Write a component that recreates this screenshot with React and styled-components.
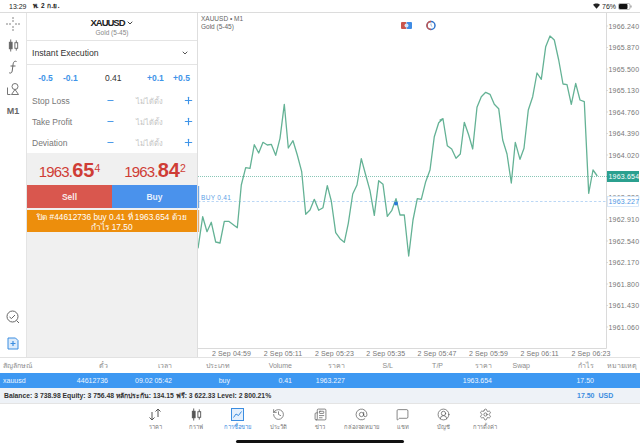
import React from "react";
import styled, { createGlobalStyle } from "styled-components";
import { ChevronDown, ArrowDown, ArrowUp, History, Newspaper, AtSign, MessageSquare, CircleUserRound, Settings, Plus, Minus } from "lucide-react";

const Global = createGlobalStyle`
  *, *::before, *::after { box-sizing: border-box; }
  html, body { margin: 0; padding: 0; background: #fff; }
  body { font-family: "Liberation Sans", "Noto Sans", "DejaVu Sans", sans-serif; color: #333; overflow: hidden; }
`;

const Page = styled.div`
  position: relative;
  width: 640px;
  height: 447px;
  overflow: hidden;
  display: flex;
  flex-direction: column;
  background: #fff;
`;

const StatusBar = styled.div`
  height: 13px;
  flex: none;
  display: flex;
  align-items: center;
  padding: 0 8px 0 9px;
  font-size: 7px;
  color: #222;
  gap: 6px;
  border-bottom: 1px solid #dcdcdc;
`;
const StatusDate = styled.span`
  letter-spacing: 0.3px;
  font-weight: 700;
  font-size: 6.5px;
`;
const StatusRight = styled.div`
  margin-left: auto;
  display: flex;
  align-items: center;
  gap: 2px;
`;
const Main = styled.div`
  height: 345px;
  flex: none;
  display: flex;
  border-bottom: 1px solid #e2e2e2;
`;
const ToolRail = styled.div`
  width: 27px;
  flex: none;
  display: flex;
  flex-direction: column;
  align-items: center;
  color: #666;
  border-right: 1px solid #e4e4e4;
`;
const ToolSlot = styled.div`
  height: 21.7px;
  display: flex;
  align-items: center;
  justify-content: center;
  font-size: 9px;
  font-weight: 700;
  color: ${(p) => p.$color || "#666"};
`;
const RailBottom = styled.div`
  margin-top: auto;
  display: flex;
  flex-direction: column;
  gap: 4.5px;
  padding-bottom: 3px;
`;
const OrderPanel = styled.div`
  width: 171px;
  flex: none;
  display: flex;
  flex-direction: column;
  background: #f0f0f0;
  border-right: 1px solid #dedede;
`;
const SymbolHead = styled.div`
  height: 28px;
  flex: none;
  background: #fff;
  border-bottom: 1px solid #e4e4e4;
  display: flex;
  flex-direction: column;
  align-items: center;
  justify-content: center;
`;
const SymbolName = styled.div`
  display: flex;
  align-items: center;
  gap: 1px;
  font-weight: 700;
  font-size: 9.5px;
  letter-spacing: -1px;
  line-height: 12px;
  color: #222;
`;
const SymbolSub = styled.div`
  font-size: 6.5px;
  line-height: 8px;
  color: #888;
`;
const ExecRow = styled.div`
  height: 24px;
  flex: none;
  background: #fff;
  border-bottom: 1px solid #e4e4e4;
  display: flex;
  align-items: center;
  justify-content: space-between;
  padding: 0 8px 0 5px;
  font-size: 8.7px;
  color: #333;
`;
const FormBlock = styled.div`
  height: 88px;
  flex: none;
  background: #fff;
  display: flex;
  flex-direction: column;
`;
const StepRow = styled.div`
  height: 25px;
  display: grid;
  grid-template-columns: 11px 15px 10px 14px 28px 16px 26px 16px 10px 17px;
  align-items: center;
  font-size: 8.5px;
`;
const Step = styled.span`
  color: ${(p) => (p.$plain ? "#333" : "#3f94e8")};
  font-weight: ${(p) => (p.$plain ? 400 : 700)};
  grid-column: ${(p) => p.$col};
  text-align: center;
  white-space: nowrap;
`;
const FieldRow = styled.div`
  height: 21px;
  display: grid;
  grid-template-columns: 72px 12px 66px 12px;
  align-items: center;
  padding-left: 5px;
  font-size: 8.5px;
  color: #777;
`;
const FieldSign = styled.span`
  color: #3f94e8;
  display: flex;
  justify-content: center;
`;
const FieldHint = styled.span`
  font-size: 7.5px;
  color: #c4c4c4;
  text-align: center;
`;
const Quotes = styled.div`
  height: 32px;
  flex: none;
  display: grid;
  grid-template-columns: 85px 86px;
  align-items: center;
  color: #cf3d36;
  padding-top: 3px;
`;
const Quote = styled.div`
  display: flex;
  justify-content: center;
  align-items: baseline;
  font-size: 15px;
  letter-spacing: -0.8px;
  line-height: 20px;
`;
const QuoteBig = styled.span`
  font-size: 20px;
  font-weight: 700;
  letter-spacing: 0;
  line-height: 20px;
`;
const QuoteSup = styled.span`
  align-self: flex-start;
  font-size: 10.5px;
  letter-spacing: 0;
  line-height: 16px;
`;
const TradeRow = styled.div`
  height: 23px;
  flex: none;
  display: flex;
`;
const TradeButton = styled.div`
  flex: 1;
  display: flex;
  align-items: center;
  justify-content: center;
  font-size: 8.5px;
  font-weight: 700;
  color: rgba(255, 255, 255, 0.88);
  background: ${(p) => p.$bg};
`;
const Notice = styled.div`
  margin-top: 2px;
  height: 22px;
  flex: none;
  padding-top: 2px;
  background: #ed8e0c;
  color: #fff;
  font-size: 8.3px;
  line-height: 10px;
  text-align: center;
  white-space: nowrap;
`;
const ChartArea = styled.div`
  position: relative;
  flex: 1;
  min-width: 0;
`;
const ChartSvg = styled.svg`
  display: block;
  width: 442px;
  height: 344px;
`;
const ChartTitle = styled.div`
  position: absolute;
  left: 3px;
  top: 2px;
  font-size: 6.5px;
  line-height: 8px;
  color: #666;
`;
const TableHead = styled.div`
  height: 15px;
  flex: none;
  display: grid;
  grid-template-columns: 40px 65px 64px 58px 62px 53px 48px 50px 49px 38px 64px 43px;
  padding-left: 3px;
  align-items: center;
  font-size: 7px;
  color: #8c8c8c;
`;
const HeadCell = styled.span`
  text-align: ${(p) => (p.$left ? "left" : "right")};
  white-space: nowrap;
`;
const TableRow = styled(TableHead)`
  background: #3d98f2;
  color: #eef6ff;
`;
const BalanceBar = styled.div`
  height: 16px;
  flex: none;
  display: flex;
  align-items: center;
  background: #eef2f7;
  padding-left: 4px;
  font-size: 6.8px;
  font-weight: 700;
  color: #333;
  border-bottom: 1px solid #e4e4e4;
`;
const BalanceTotal = styled.span`
  margin-left: auto;
  width: 63px;
  font-size: 7px;
  color: #3b8de0;
  white-space: pre;
`;
const TabBar = styled.div`
  flex: 1;
  display: flex;
  justify-content: center;
`;
const Tab = styled.div`
  width: 41.25px;
  display: flex;
  flex-direction: column;
  align-items: center;
  padding-top: 4px;
  color: ${(p) => (p.$active ? "#3b8de0" : "#555")};
`;
const TabIcon = styled.div`
  height: 13px;
  display: flex;
  align-items: center;
  justify-content: center;
`;
const TabLabel = styled.div`
  margin-top: 2px;
  font-size: 5.8px;
  line-height: 9px;
  white-space: nowrap;
  color: ${(p) => (p.$active ? "#3b8de0" : "#777")};
`;
const HomeIndicator = styled.div`
  position: absolute;
  left: 236px;
  top: 440px;
  width: 168px;
  height: 3px;
  border-radius: 2px;
  background: #111;
`;

const z8 = [[0,385],[14,290],[27,335],[40,307],[53,366],[66,369],[79,304],[92,304],[118,323],[130,195],[143,143],[156,145],[169,74],[182,99],[195,67],[208,75],[220,73],[233,106],[246,55],[259,-47],[271,84],[285,62],[298,105],[311,155],[323,283],[336,270],[349,238],[362,271],[375,263],[388,197],[400,243],[413,338],[426,356],[439,367],[451,310],[464,222],[477,195],[490,116],[503,165],[516,212],[529,286],[542,182],[555,193],[568,289],[581,272],[594,236],[606,285],[619,285],[632,408],[645,300],[658,236],[670,238],[683,185],[696,150],[709,50],[722,8]];
const z6 = [[0,360],[9,357],[22,437],[35,447],[48,475],[61,462],[73,367],[86,405],[98,447],[111,322],[124,290],[137,277],[150,283],[163,313],[176,326],[188,420],[201,462],[214,549],[226,427],[240,478],[252,445],[265,330],[278,290],[291,219],[304,238],[317,140],[330,108],[343,120],[356,180],[369,252],[381,254],[394,313],[407,250],[420,300],[433,305],[446,580],[459,510],[472,528]];
const line = [
  ...z8.map(([x, y]) => [198 + x / 3, 120 + y / 3]),
  [198 + 735 / 3, 120 - 4 / 3],
  ...z6.map(([x, y]) => [440 + x / 3, y / 3]),
].map((p) => p.map((v) => v.toFixed(1)).join(",")).join(" ");

const priceTicks = [[26,"1966.240"],[47.5,"1965.870"],[69,"1965.500"],[90.5,"1965.130"],[112,"1964.760"],[133.5,"1964.390"],[155,"1964.020"],[219.5,"1962.910"],[241,"1962.540"],[262.5,"1962.170"],[284,"1961.800"],[305.5,"1961.430"],[327,"1961.060"]];
const timeTicks = [[231.5,"04:59"],[283,"05:11"],[334.5,"05:23"],[385.8,"05:35"],[437,"05:47"],[488.5,"05:59"],[539.7,"06:11"],[591,"06:23"]];

function Chart() {
  return (
    <ChartSvg viewBox="198 13 442 344">
      <g stroke="#dadada" strokeWidth="1" fill="none">
        <path d="M606.5 13V348.5H198" />
      </g>
      <path d="M198 176.5H607" stroke="#54ad97" strokeWidth="0.7" strokeDasharray="1 1" />
      <path d="M198 201.5H607" stroke="#a9cdf2" strokeWidth="0.8" strokeDasharray="2.5 2" />
      <polyline points={line} fill="none" stroke="#64b295" strokeWidth="1.3" strokeLinejoin="round" />
      <circle cx="396" cy="203.500" r="2" fill="#2a7ad8" />
      <rect x="198" y="186" width="1.2" height="22" fill="#75a9e6" />
      <rect x="198" y="210" width="1.2" height="22" fill="#e5ad73" />
      <g fontFamily="Liberation Sans, sans-serif" fontSize="7" letterSpacing="0.2">
        <text x="201" y="199.500" fill="#5d9fe6" fontSize="6.5" letterSpacing="0.3">BUY 0.41</text>
        {priceTicks.map(([y, t]) => (
          <g key={t}>
            <path d={`M606 ${y}h2`} stroke="#cfcfcf" strokeWidth="0.7" />
            <text x="608.5" y={y + 2.5} fill="#777">{t}</text>
          </g>
        ))}
        <text x="608.5" y="199.5" fill="#777">1963.280</text>
        <rect x="607" y="171" width="32" height="11" fill="#2ba08f" />
        <text x="608.5" y="179" fill="#fff">1963.654</text>
        <rect x="607.5" y="196.500" width="31" height="10" fill="#fff" stroke="#cfe3f8" strokeWidth="0.8" />
        <text x="608.5" y="204" fill="#4d96e4">1963.227</text>
        {timeTicks.map(([x, t]) => (
          <text key={t} x={x} y="355.5" textAnchor="middle" fill="#777" letterSpacing="0.1">{`2 Sep ${t}`}</text>
        ))}
      </g>
      <g>
        <rect x="401" y="22" width="5.500" height="7" rx="1" fill="#c9554b" />
        <rect x="406.500" y="22" width="5.500" height="7" rx="1" fill="#3f8ce4" />
        <circle cx="406.500" cy="25.500" r="2" fill="#d7e6f7" />
        <circle cx="431" cy="25.500" r="4" fill="none" stroke="#2f74cc" strokeWidth="1.500" />
        <path d="M431 21.500a4 4 0 0 0 0 8" fill="none" stroke="#c9554b" strokeWidth="1.500" />
        <path d="M431 23.500v2l1.300 1.200" fill="none" stroke="#6b94c8" strokeWidth="0.700" />
      </g>
    </ChartSvg>
  );
}

const Crosshair = () => (
  <svg width="14" height="14" viewBox="0 0 14 14" fill="none" stroke="#777" strokeWidth="0.9"><path d="M7 0v5M7 9v5M0 7h5M9 7h5" strokeDasharray="2 1" /></svg>
);
const Candles = ({ size = 13, c = "#666" }) => (
  <svg width={size} height={size} viewBox="0 0 14 14" fill="none" stroke={c} strokeWidth="1"><path d="M4 0.500v13M10 1.500v11" /><rect x="2.500" y="3.500" width="3" height="7" fill={c} /><rect x="8.500" y="4" width="3" height="6" fill="#fff" /></svg>
);
const Func = () => (
  <svg width="12" height="14" viewBox="0 0 12 14" fill="none" stroke="#666" strokeWidth="1"><path d="M9.500 1.500C7 .5 6.300 2.500 6 5l-.8 6c-.3 2-1.500 2.500-3 1.800M3.500 6H8.500" /></svg>
);
const Shapes = () => (
  <svg width="14" height="14" viewBox="0 0 14 14" fill="none" stroke="#666" strokeWidth="0.9"><circle cx="9" cy="4.500" r="3" /><path d="M1.500 5.500v7h3" /><path d="M9 7.500 12.500 12.500H5.500Z" /></svg>
);
const ChartSearch = () => (
  <svg width="14" height="14" viewBox="0 0 14 14" fill="none" stroke="#666" strokeWidth="1"><circle cx="6.500" cy="6.500" r="5.500" /><path d="M10.500 10.500 13 13M3.500 7l2 1.500 3.500-3.500" /></svg>
);
const NewOrder = () => (
  <svg width="12" height="13" viewBox="0 0 12 13" fill="none" stroke="#3b8de0" strokeWidth="1"><path d="M1 1h7.500L11 3.500V12H1Z" fill="#dcebfb" /><path d="M6 4v5M3.500 6.500h5" strokeWidth="1.200" /></svg>
);
const TradeIcon = () => (
  <svg width="13" height="13" viewBox="0 0 13 13" fill="none" stroke="#3b8de0" strokeWidth="1"><rect x="0.500" y="0.500" width="12" height="12" fill="#e3effc" /><path d="M2.500 9.500 5 6l2.500 1.500L10.500 3.500" /></svg>
);
const Arrows = () => (
  <svg width="14" height="13" viewBox="0 0 14 13" fill="none" stroke="#555" strokeWidth="1"><path d="M4 4v8M1.500 9.500 4 12l2.500-2.500M10 9V1M7.500 3.500 10 1l2.500 2.500" /></svg>
);

const headers = [["สัญลักษณ์", true], ["ตั๋ว"], ["เวลา"], ["ประเภท"], ["Volume"], ["ราคา"], ["S/L"], ["T/P"], ["ราคา"], ["Swap"], ["กำไร"], ["หมายเหตุ"]];
const cells = [["xauusd", true], ["44612736"], ["09.02 05:42"], ["buy"], ["0.41"], ["1963.227"], [""], [""], ["1963.654"], [""], ["17.50"], [""]];
const tabs = [
  ["ราคา", <Arrows />],
  ["กราฟ", <Candles size={13} c="#555" />],
  ["การซื้อขาย", <TradeIcon />, true],
  ["ประวัติ", <History size={13} strokeWidth={1.3} />],
  ["ข่าว", <Newspaper size={13} strokeWidth={1.3} />],
  ["กล่องจดหมาย", <AtSign size={13} strokeWidth={1.3} />],
  ["แชท", <MessageSquare size={13} strokeWidth={1.3} />],
  ["บัญชี", <CircleUserRound size={13} strokeWidth={1.3} />],
  ["การตั้งค่า", <Settings size={13} strokeWidth={1.3} />],
];
const fields = ["Stop Loss", "Take Profit", "Deviation"];

export default function App() {
  return (
    <Page>
      <Global />
      <StatusBar>
        <span>13:29</span>
        <StatusDate>พ. 2 ก.ย.</StatusDate>
        <StatusRight>
          <svg width="7" height="6" viewBox="0 0 8 6" fill="#222"><path d="M0 1.500C2-.5 6-.5 8 1.500L4 6Z" /></svg>
          <span>76%</span>
          <svg width="14" height="7" viewBox="0 0 14 7" fill="none"><rect x="0.500" y="0.500" width="11.500" height="6" rx="1.500" stroke="#888" strokeWidth="0.600" /><rect x="1" y="1" width="8.500" height="5" rx="1" fill="#111" /><rect x="12.500" y="2.500" width="1" height="2" fill="#888" /></svg>
        </StatusRight>
      </StatusBar>
      <Main>
        <ToolRail>
          <ToolSlot><Crosshair /></ToolSlot>
          <ToolSlot><Candles /></ToolSlot>
          <ToolSlot><Func /></ToolSlot>
          <ToolSlot><Shapes /></ToolSlot>
          <ToolSlot>M1</ToolSlot>
          <RailBottom>
            <ToolSlot><ChartSearch /></ToolSlot>
            <ToolSlot $color="#3b8de0"><NewOrder /></ToolSlot>
          </RailBottom>
        </ToolRail>
        <OrderPanel>
          <SymbolHead>
            <SymbolName>XAUUSD<ChevronDown size={8} strokeWidth={2.500} /></SymbolName>
            <SymbolSub>Gold (5-45)</SymbolSub>
          </SymbolHead>
          <ExecRow>Instant Execution<ChevronDown size={8} strokeWidth={2.500} /></ExecRow>
          <FormBlock>
            <StepRow>
              <Step $col="2">-0.5</Step>
              <Step $col="4">-0.1</Step>
              <Step $col="6" $plain>0.41</Step>
              <Step $col="8">+0.1</Step>
              <Step $col="10 / 11">+0.5</Step>
            </StepRow>
            {fields.map((f) => (
              <FieldRow key={f}>
                <span>{f}</span>
                <FieldSign><Minus size={9} strokeWidth={2.500} /></FieldSign>
                <FieldHint>ไม่ได้ตั้ง</FieldHint>
                <FieldSign><Plus size={11} strokeWidth={2.500} /></FieldSign>
              </FieldRow>
            ))}
          </FormBlock>
          <Quotes>
            <Quote>1963.<QuoteBig>65</QuoteBig><QuoteSup>4</QuoteSup></Quote>
            <Quote>1963.<QuoteBig>84</QuoteBig><QuoteSup>2</QuoteSup></Quote>
          </Quotes>
          <TradeRow>
            <TradeButton $bg="#d9574e">Sell</TradeButton>
            <TradeButton $bg="#4a92ec">Buy</TradeButton>
          </TradeRow>
          <Notice>ปิด #44612736 buy 0.41 ที่ 1963.654 ด้วย<br />กำไร 17.50</Notice>
        </OrderPanel>
        <ChartArea>
          <Chart />
          <ChartTitle>XAUUSD • M1<br />Gold (5-45)</ChartTitle>
        </ChartArea>
      </Main>
      <TableHead>
        {headers.map(([t, l], i) => <HeadCell key={i} $left={l}>{t}</HeadCell>)}
      </TableHead>
      <TableRow>
        {cells.map(([t, l], i) => <HeadCell key={i} $left={l}>{t}</HeadCell>)}
      </TableRow>
      <BalanceBar>
        Balance: 3 738.98 Equity: 3 756.48 หลักประกัน: 134.15 ฟรี: 3 622.33 Level: 2 800.21%
        <BalanceTotal>17.50  USD</BalanceTotal>
      </BalanceBar>
      <TabBar>
        {tabs.map(([label, icon, active]) => (
          <Tab key={label} $active={active}>
            <TabIcon>{icon}</TabIcon>
            <TabLabel $active={active}>{label}</TabLabel>
          </Tab>
        ))}
      </TabBar>
      <HomeIndicator />
    </Page>
  );
}
